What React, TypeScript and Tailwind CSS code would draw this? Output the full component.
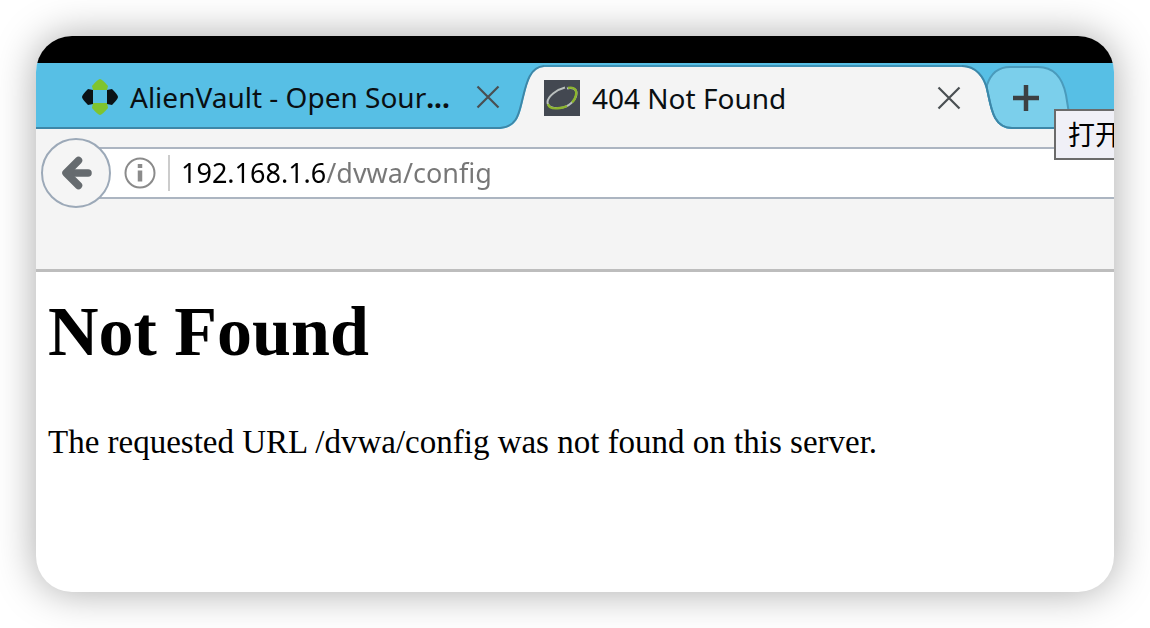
function AlienIcon() {
  return (
    <svg viewBox="0 0 36 36" className="h-9 w-9 shrink-0" aria-hidden="true">
      <path d="M18 0 Q20 0 26 7 L25 11 H11 L10 7 Q16 0 18 0 Z" fill="#7fc42f" />
      <path d="M18 36 Q20 36 26 29 L25 24 H11 L10 29 Q16 36 18 36 Z" fill="#7fc42f" />
      <path d="M0 18 Q0 16 6 10 L11 11 V25 L6 26 Q0 20 0 18 Z" fill="#0b1216" />
      <path d="M36 18 Q36 16 30 10 L25 11 V25 L30 26 Q36 20 36 18 Z" fill="#0b1216" />
    </svg>
  );
}

function RingIcon() {
  return (
    <svg viewBox="0 0 36 36" className="h-9 w-9 shrink-0" fill="none" aria-hidden="true">
      <rect width="36" height="36" fill="#434851" />
      <path
        d="M21 7.500 C13 9.500 4 16 3.500 22 C3.500 27 9 28.500 16 28 C25 27 32.500 20 32.500 13 C32.500 9 28 7 23 8.500"
        stroke="#b9bfbe"
        strokeWidth="2"
      />
      <path d="M24 8 C30 6.500 33 9.500 32 15 C31.500 18 30 20.500 28 22.500" stroke="#8db52f" strokeWidth="2.4" />
      <path d="M4 24 C5 28 10 29 16 28 C19 27.800 21 27 23 26" stroke="#8db52f" strokeWidth="2.4" />
    </svg>
  );
}

function CloseIcon() {
  return (
    <svg viewBox="0 0 24 24" className="h-6 w-6" fill="none" stroke="#4a4f52" strokeWidth="2.2" aria-hidden="true">
      <path d="M1.5 1.5 L22.5 22.5 M22.5 1.5 L1.5 22.5" />
    </svg>
  );
}

function Tabs() {
  return (
    <div className="flex h-[66px] bg-[#57bfe5] text-[28px] leading-9 text-[#0a0f12]">
      <div className="flex w-[464px] shrink-0 items-center border-b-2 border-[#3d87a8] pl-[46px] pt-1">
        <AlienIcon />
        <span className="ml-3 flex-1 whitespace-nowrap">
          AlienVault - Open Sour<b>...</b>
        </span>
        <button type="button" aria-label="Close AlienVault tab">
          <CloseIcon />
        </button>
      </div>
      <svg viewBox="0 0 44 66" className="h-[66px] w-11 shrink-0" fill="none" aria-hidden="true">
        <path d="M0 66 C18 65 20 50 23 38 C27 22 30 4 44 4 V66 Z" fill="#f4f4f4" />
        <path d="M0 65 C17 64 19 50 22 38 C26 22 29 4 44 3" stroke="#3d87a8" strokeWidth="2" />
      </svg>
      <div className="mt-0.5 flex min-w-0 flex-1 items-center border-t-2 border-[#4293b5] bg-[#f4f4f4]">
        <RingIcon />
        <span className="ml-3 flex-1 truncate">404 Not Found</span>
        <button type="button" aria-label="Close 404 Not Found tab" className="mr-[1px]">
          <CloseIcon />
        </button>
      </div>
      <button type="button" aria-label="Open a new tab" className="h-[66px] w-[110px] shrink-0">
        <svg viewBox="0 0 110 66" className="h-full w-full" fill="none" aria-hidden="true">
          <path d="M0 4 C14 4 21 14 24 26 C28 42 30 66 50 66 H0 Z" fill="#f4f4f4" />
          <path
            d="M25 22 C29 10 36 4 48 4 H76 C94 4 101 17 104 32 C106 44 108 56 109 65 H50 C30 65 29 42 25 26 Z"
            fill="#7bcfeb"
            stroke="#4a9bbc"
            strokeWidth="2"
          />
          <path d="M0 3 C14 3 22 14 25 26 C29 42 30 65 50 65 H110" stroke="#3d87a8" strokeWidth="2" />
          <path d="M64 22 V48 M51 35 H77" stroke="#3c4042" strokeWidth="4.5" />
        </svg>
      </button>
      <div className="w-[42px] shrink-0 border-b-2 border-[#3d87a8]" />
    </div>
  );
}

function AddressBar() {
  return (
    <div className="h-[143px] border-b-[3px] border-[#bdbdbd] bg-[#f4f4f4] pl-[5px] pt-[9px]">
      <div className="flex items-center">
        <button
          type="button"
          aria-label="Back"
          className="z-10 flex h-[70px] w-[70px] shrink-0 items-center justify-center rounded-full border-2 border-[#9ca9b8] bg-[#f5f5f5]"
        >
          <svg
            viewBox="0 0 32 34"
            className="h-[34px] w-8"
            fill="none"
            stroke="#666b6f"
            strokeWidth="7.500"
            strokeLinecap="round"
            strokeLinejoin="round"
            aria-hidden="true"
          >
            <path d="M28 17 H8" />
            <path d="M18.500 4.500 L6 17 L18.500 29.500" />
          </svg>
        </button>
        <div className="-ml-4 flex h-[52px] min-w-0 flex-1 items-center border-y-2 border-[#acb5c1] bg-white pl-[29px]">
          <svg viewBox="0 0 32 32" className="h-8 w-8 shrink-0" fill="none" stroke="#8b8b8b" aria-hidden="true">
            <circle cx="16" cy="16" r="14.500" strokeWidth="2" />
            <path d="M16 7 V11 M16 13.500 V24.500" strokeWidth="4.500" />
          </svg>
          <span className="ml-3 h-9 w-0.5 shrink-0 bg-[#cccccc]" />
          <input
            aria-label="Address"
            defaultValue="192.168.1.6/dvwa/config"
            className="ml-[11px] h-10 min-w-0 flex-1 bg-[linear-gradient(90deg,#000000_145px,#777777_145px)] bg-clip-text text-[27px] text-transparent outline-none"
          />
        </div>
      </div>
    </div>
  );
}

export default function App() {
  return (
    <div className="flex min-h-screen bg-white p-9 font-['Noto_Sans','Noto_Sans_CJK_SC',sans-serif]">
      <div className="relative min-w-0 flex-1 overflow-hidden rounded-[36px] bg-white shadow-[0_0_40px_rgba(0,0,0,0.34)]">
        <div className="h-[27px] bg-black" />
        <Tabs />
        <AddressBar />
        <main className="px-3 pt-[22px] font-['Liberation_Serif',serif] text-black">
          <h1 className="text-[70px] font-bold leading-[76px]">Not Found</h1>
          <p className="mt-[52px] text-[33px] leading-10">
            The requested URL /dvwa/config was not found on this server.
          </p>
        </main>
        <div
          role="tooltip"
          className="absolute right-0 top-[73px] z-20 h-[51px] w-[60px] overflow-hidden whitespace-nowrap border-2 border-r-0 border-[#6b6b6b] bg-[#f0f0f7] pl-3 font-['Noto_Sans_CJK_SC',sans-serif] text-[27px] leading-[46px] text-black"
        >
          打开
        </div>
      </div>
    </div>
  );
}
